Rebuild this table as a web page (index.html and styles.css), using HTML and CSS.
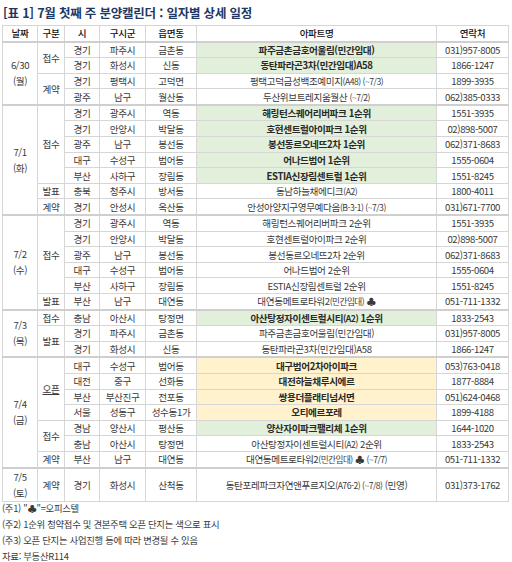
FILE: index.html
```html
<!DOCTYPE html>
<html lang="ko">
<head>
<meta charset="utf-8">
<link rel="stylesheet" href="styles.css">
</head>
<body>
<h1 class="title">[표 1] 7월 첫째 주 분양캘린더 : 일자별 상세 일정</h1>
<table class="cal">
<colgroup>
<col class="c-date"><col class="c-type"><col class="c-si"><col class="c-gu"><col class="c-dong"><col class="c-apt"><col class="c-tel">
</colgroup>
<thead>
<tr><th>날짜</th><th>구분</th><th>시</th><th>구시군</th><th>읍면동</th><th>아파트명</th><th>연락처</th></tr>
</thead>
<tbody class="grp">
<tr><td rowspan="4" class="date">6/30<br>(월)</td><td rowspan="2">접수</td><td>경기</td><td>파주시</td><td>금촌동</td><td class="apt g">파주금촌금호어울림(민간임대)</td><td>031)957-8005</td></tr>
<tr><td>경기</td><td>화성시</td><td>신동</td><td class="apt g">동탄파라곤3차(민간임대)A58</td><td>1866-1247</td></tr>
<tr><td rowspan="2">계약</td><td>경기</td><td>평택시</td><td>고덕면</td><td class="apt">평택고덕금성백조예미지<span class="sm">(A48) (~7/3)</span></td><td>1899-3935</td></tr>
<tr><td>광주</td><td>남구</td><td>월산동</td><td class="apt">두산위브트레지움월산 <span class="sm">(~7/2)</span></td><td>062)385-0333</td></tr>
</tbody>
<tbody class="grp">
<tr><td rowspan="7" class="date">7/1<br>(화)</td><td rowspan="5">접수</td><td>경기</td><td>광주시</td><td>역동</td><td class="apt g">해링턴스퀘어리버파크 1순위</td><td>1551-3935</td></tr>
<tr><td>경기</td><td>안양시</td><td>박달동</td><td class="apt g">호현센트럴아이파크 1순위</td><td>02)898-5007</td></tr>
<tr><td>광주</td><td>남구</td><td>봉선동</td><td class="apt g">봉선동르오네뜨2차 1순위</td><td>062)371-8683</td></tr>
<tr><td>대구</td><td>수성구</td><td>범어동</td><td class="apt g">어나드범어 1순위</td><td>1555-0604</td></tr>
<tr><td>부산</td><td>사하구</td><td>장림동</td><td class="apt g">ESTIA신장림센트럴 1순위</td><td>1551-8245</td></tr>
<tr><td>발표</td><td>충북</td><td>청주시</td><td>방서동</td><td class="apt">동남하늘채에디크<span class="sm">(A2)</span></td><td>1800-4011</td></tr>
<tr><td>계약</td><td>경기</td><td>안성시</td><td>옥산동</td><td class="apt">안성아양지구영무예다음<span class="sm">(B-3-1) (~7/3)</span></td><td>031)671-7700</td></tr>
</tbody>
<tbody class="grp">
<tr><td rowspan="6" class="date">7/2<br>(수)</td><td rowspan="5">접수</td><td>경기</td><td>광주시</td><td>역동</td><td class="apt">해링턴스퀘어리버파크 2순위</td><td>1551-3935</td></tr>
<tr><td>경기</td><td>안양시</td><td>박달동</td><td class="apt">호현센트럴아이파크 2순위</td><td>02)898-5007</td></tr>
<tr><td>광주</td><td>남구</td><td>봉선동</td><td class="apt">봉선동르오네뜨2차 2순위</td><td>062)371-8683</td></tr>
<tr><td>대구</td><td>수성구</td><td>범어동</td><td class="apt">어나드범어 2순위</td><td>1555-0604</td></tr>
<tr><td>부산</td><td>사하구</td><td>장림동</td><td class="apt">ESTIA신장림센트럴 2순위</td><td>1551-8245</td></tr>
<tr><td>발표</td><td>부산</td><td>남구</td><td>대연동</td><td class="apt">대연동메트로타워2<span class="sm">(민간임대)</span> ♣</td><td>051-711-1332</td></tr>
</tbody>
<tbody class="grp">
<tr><td rowspan="3" class="date">7/3<br>(목)</td><td>접수</td><td>충남</td><td>아산시</td><td>탕정면</td><td class="apt g">아산탕정자이센트럴시티<span class="sm">(A2)</span> 1순위</td><td>1833-2543</td></tr>
<tr><td rowspan="2">발표</td><td>경기</td><td>파주시</td><td>금촌동</td><td class="apt">파주금촌금호어울림(민간임대)</td><td>031)957-8005</td></tr>
<tr><td>경기</td><td>화성시</td><td>신동</td><td class="apt">동탄파라곤3차(민간임대)A58</td><td>1866-1247</td></tr>
</tbody>
<tbody class="grp">
<tr><td rowspan="7" class="date">7/4<br>(금)</td><td rowspan="4"><span class="ul">오픈</span></td><td>대구</td><td>수성구</td><td>범어동</td><td class="apt y">대구범어2차아이파크</td><td>053)763-0418</td></tr>
<tr><td>대전</td><td>중구</td><td>선화동</td><td class="apt y">대전하늘채루시에르</td><td>1877-8884</td></tr>
<tr><td>부산</td><td>부산진구</td><td>전포동</td><td class="apt y">쌍용더플래티넘서면</td><td>051)624-0468</td></tr>
<tr><td>서울</td><td>성동구</td><td>성수동1가</td><td class="apt y">오티에르포레</td><td>1899-4188</td></tr>
<tr><td rowspan="2">접수</td><td>경남</td><td>양산시</td><td>평산동</td><td class="apt g">양산자이파크팰리체 1순위</td><td>1644-1020</td></tr>
<tr><td>충남</td><td>아산시</td><td>탕정면</td><td class="apt">아산탕정자이센트럴시티<span class="sm">(A2)</span> 2순위</td><td>1833-2543</td></tr>
<tr><td>계약</td><td>부산</td><td>남구</td><td>대연동</td><td class="apt">대연동메트로타워2<span class="sm">(민간임대)</span> ♣ <span class="sm">(~7/7)</span></td><td>051-711-1332</td></tr>
</tbody>
<tbody class="grp">
<tr class="tall"><td class="date">7/5<br>(토)</td><td>계약</td><td>경기</td><td>화성시</td><td>산척동</td><td class="apt">동탄포레파크자연앤푸르지오<span class="sm">(A76-2) (~7/8)</span> (민영)</td><td>031)373-1762</td></tr>
</tbody>
</table>
<div class="notes">
<p>(주1) "♣"=오피스텔</p>
<p>(주2) 1순위 청약접수 및 견본주택 오픈 단지는 색으로 표시</p>
<p>(주3) 오픈 단지는 사업진행 등에 따라 변경될 수 있음</p>
<p class="src">자료: 부동산R114</p>
</div>
</body>
</html>
```
FILE: styles.css
```css
html, body {
  margin: 0;
  padding: 0;
  background: #ffffff;
}
body {
  padding: 0 4px 0 2px;
  font-family: "Noto Sans CJK KR", "Noto Sans", sans-serif;
  color: #3a3a3a;
}
.title {
  margin: 0;
  padding: 5px 0 0 1px;
  height: 25px;
  box-sizing: border-box;
  font-size: 12.5px;
  line-height: 16px;
  font-weight: 700;
  color: #1f3864;
  letter-spacing: -0.2px;
}
.cal {
  width: 506px;
  border-collapse: collapse;
  table-layout: fixed;
  font-size: 9.6px;
  letter-spacing: -0.4px;
}
.c-date { width: 35px; }
.c-type { width: 27px; }
.c-si { width: 35px; }
.c-gu { width: 46px; }
.c-dong { width: 51px; }
.c-apt { width: 240px; }
.c-tel { width: 72px; }
.cal th,
.cal td {
  border: 1px solid #d6d6d6;
  padding: 0;
  height: 14.6px;
  line-height: 14px;
  text-align: center;
  vertical-align: middle;
  white-space: nowrap;
  overflow: hidden;
}
.cal th {
  font-weight: 500;
  color: #111;
  height: 14.5px;
}
.cal thead tr {
  border-bottom: 2px solid #cfcfcf;
}
.grp {
  border-top: 2px solid #cfcfcf;
}
.cal td.date {
  line-height: 16px;
}
.cal td.g {
  background: #e2efda;
  font-weight: 700;
  color: #2a2a2a;
}
.cal td.y {
  background: #fff2cc;
  font-weight: 700;
  color: #2a2a2a;
}
.sm {
  font-size: 8.6px;
  letter-spacing: -0.5px;
}
.ul {
  text-decoration: underline;
}
.cal tr.tall td {
  height: 29px;
}
.notes {
  margin-top: -2px;
  font-size: 9.4px;
  letter-spacing: -0.3px;
}
.notes p {
  margin: 0;
  line-height: 16px;
}
```
